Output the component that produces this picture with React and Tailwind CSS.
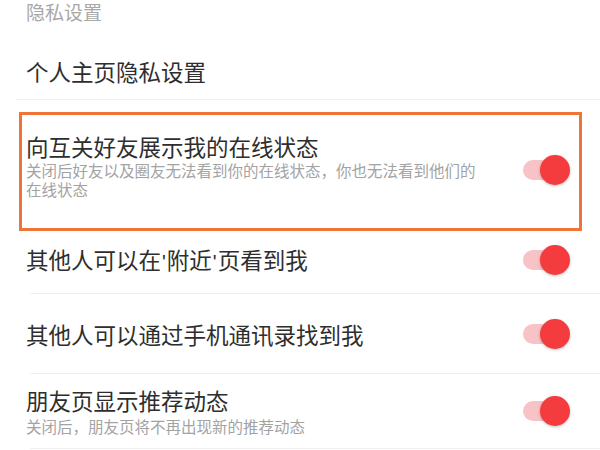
import React from "react";

function Toggle() {
  return (
    <div className="relative w-[47px] h-[30px] shrink-0">
      <div className="absolute left-0 top-[5px] w-[40px] h-[20px] rounded-full bg-[#f8c3c6]" />
      <div className="absolute right-0 top-0 w-[30px] h-[30px] rounded-full bg-[#f43b3d] shadow-[0_1px_3px_rgba(0,0,0,0.25)]" />
    </div>
  );
}

export default function App() {
  const font = { fontFamily: '"Noto Sans CJK SC", "Noto Sans", sans-serif' };
  return (
    <div className="w-[600px] h-[450px] overflow-hidden bg-white flex flex-col" style={font}>
      <div className="h-[24px] leading-[24px] text-[19px] text-[#a8a8a8] pl-[26px]">隐私设置</div>
      <div className="pt-[32px] pb-[13px] leading-[30px] text-[22.5px] text-[#2e2e2e] pl-[26px]">个人主页隐私设置</div>
      <div className="h-px bg-[#f0f0f0] ml-[16px]" />

      <div className="mt-[12px] ml-[19px] w-[563px] h-[119px] border-[3px] border-[#ef7438] flex items-center justify-between pl-[4px] pr-[9px] pb-[12px]">
        <div className="flex flex-col">
          <div className="text-[22.5px] leading-[28px] text-[#2e2e2e]">向互关好友展示我的在线状态</div>
          <div className="mt-[1px] text-[15.5px] leading-[19px] text-[#a3a3a3]">
            关闭后好友以及圈友无法看到你的在线状态，你也无法看到他们的
            <br />
            在线状态
          </div>
        </div>
        <div className="mt-[8px]">
          <Toggle />
        </div>
      </div>

      <div className="h-[62px] pb-[4px] flex items-center justify-between pl-[26px] pr-[30px]">
        <div className="text-[22.5px] leading-[28px] text-[#2e2e2e]">
          其他人可以在<span className="text-[20px] px-[1px]" style={{ fontFamily: '"Liberation Sans", sans-serif' }}>'</span>附近<span className="text-[20px] px-[1px]" style={{ fontFamily: '"Liberation Sans", sans-serif' }}>'</span>页看到我
        </div>
        <Toggle />
      </div>
      <div className="h-px bg-[#f0f0f0] ml-[30px]" />

      <div className="h-[79px] flex items-center justify-between pl-[26px] pr-[30px]">
        <div className="text-[22.5px] leading-[28px] text-[#2e2e2e]">其他人可以通过手机通讯录找到我</div>
        <Toggle />
      </div>
      <div className="h-px bg-[#f0f0f0] ml-[30px]" />

      <div className="h-[74px] flex items-center justify-between pl-[26px] pr-[30px]">
        <div className="flex flex-col">
          <div className="text-[22.5px] leading-[28px] text-[#2e2e2e]">朋友页显示推荐动态</div>
          <div className="mt-[2px] text-[15.5px] leading-[20px] text-[#a3a3a3]">关闭后，朋友页将不再出现新的推荐动态</div>
        </div>
        <Toggle />
      </div>
      <div className="h-px bg-[#f0f0f0] ml-[30px]" />
    </div>
  );
}
